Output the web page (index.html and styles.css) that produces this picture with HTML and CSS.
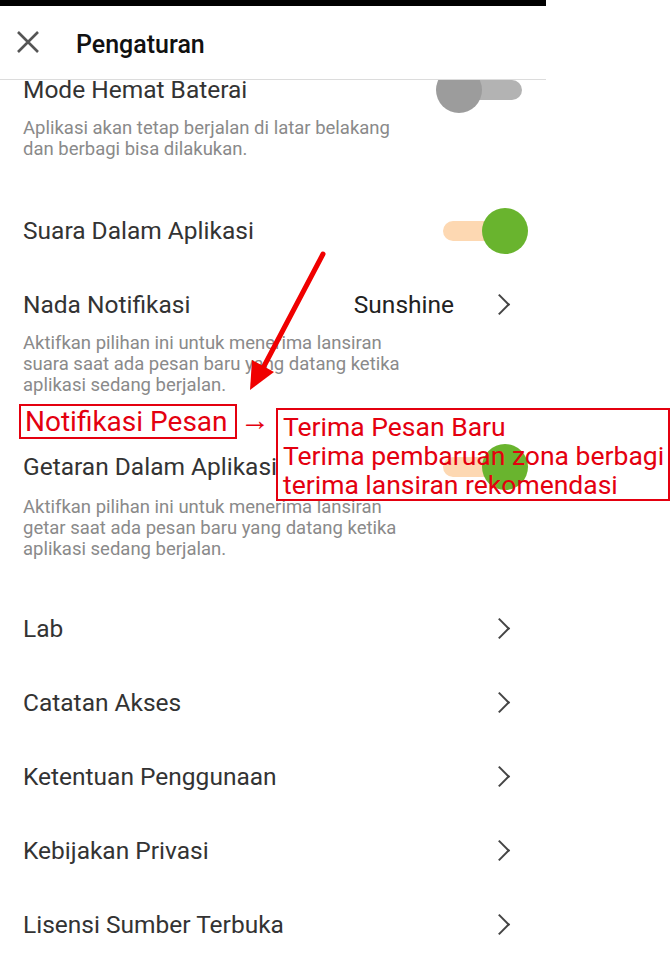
FILE: index.html
```html
<!DOCTYPE html>
<html lang="id">
<head>
  <meta charset="UTF-8">
  <title>Pengaturan</title>
  <link rel="stylesheet" href="styles.css">
</head>
<body>
  <div class="phone">
    <div class="statusbar"></div>
    <header class="topbar">
      <svg class="close" width="26" height="26" viewBox="0 0 26 26">
        <path d="M3 3 L23 23 M23 3 L3 23" stroke="#555" stroke-width="2.6" fill="none"/>
      </svg>
      <h1>Pengaturan</h1>
    </header>

    <div class="scroll">
      <ul class="list">
        <li class="item first">
          <div class="row">
            <span class="title">Mode Hemat Baterai</span>
            <span class="toggle off"><span class="knob"></span></span>
          </div>
          <p class="desc">Aplikasi akan tetap berjalan di latar belakang<br>dan berbagi bisa dilakukan.</p>
        </li>
        <li class="item simple">
          <div class="row">
            <span class="title">Suara Dalam Aplikasi</span>
            <span class="toggle on"><span class="knob"></span></span>
          </div>
        </li>
        <li class="item">
          <div class="row">
            <span class="title">Nada Notifikasi</span>
            <span class="value">Sunshine</span>
            <span class="chev"></span>
          </div>
          <p class="desc">Aktifkan pilihan ini untuk menerima lansiran<br>suara saat ada pesan baru yang datang ketika<br>aplikasi sedang berjalan.</p>
        </li>
        <li class="item tight">
          <div class="row">
            <span class="title">Getaran Dalam Aplikasi</span>
            <span class="toggle on"><span class="knob"></span></span>
          </div>
          <p class="desc">Aktifkan pilihan ini untuk menerima lansiran<br>getar saat ada pesan baru yang datang ketika<br>aplikasi sedang berjalan.</p>
        </li>
        <li class="item simple">
          <div class="row"><span class="title">Lab</span><span class="chev"></span></div>
        </li>
        <li class="item simple">
          <div class="row"><span class="title">Catatan Akses</span><span class="chev"></span></div>
        </li>
        <li class="item simple">
          <div class="row"><span class="title">Ketentuan Penggunaan</span><span class="chev"></span></div>
        </li>
        <li class="item simple">
          <div class="row"><span class="title">Kebijakan Privasi</span><span class="chev"></span></div>
        </li>
        <li class="item simple">
          <div class="row"><span class="title">Lisensi Sumber Terbuka</span><span class="chev"></span></div>
        </li>
      </ul>
    </div>
  </div>

  <!-- annotations drawn over the screenshot -->
  <svg class="arrow" width="672" height="960" viewBox="0 0 672 960">
    <line x1="323" y1="254" x2="262" y2="370" stroke="#f00000" stroke-width="5" stroke-linecap="round"/>
    <polygon points="250,390 252,360 274,372" fill="#f00000"/>
  </svg>
  <div class="note-label">Notifikasi Pesan</div>
  <div class="note-arrow">&rarr;</div>
  <div class="note-box">
    Terima Pesan Baru<br>
    Terima pembaruan zona berbagi<br>
    terima lansiran rekomendasi
  </div>
</body>
</html>
```

FILE: styles.css
```css
body {
  margin: 0;
  background: #fff;
  font-family: Roboto, "Liberation Sans", sans-serif;
  width: 672px;
  height: 960px;
  overflow: hidden;
}

.phone {
  width: 546px;
  height: 960px;
  display: flex;
  flex-direction: column;
}

.statusbar {
  height: 6px;
  background: #000;
  flex-shrink: 0;
}

.topbar {
  height: 70px;
  padding: 3px 0 0 15px;
  border-bottom: 1px solid #dcdcdc;
  display: flex;
  align-items: center;
  flex-shrink: 0;
}

.close {
  display: block;
  margin-top: -4px;
}

.topbar h1 {
  margin: 0 0 0 35px;
  font-size: 25px;
  font-weight: 500;
  color: #111;
}

.scroll {
  flex: 1;
  overflow: hidden;
}

.list {
  list-style: none;
  margin: -24px 0 0;
  padding: 0;
}

.item {
  padding: 24px 18px 34px 23px;
}

.item.simple {
  padding-bottom: 24px;
}

.item.tight {
  padding-bottom: 32px;
}

.row {
  display: flex;
  align-items: center;
  height: 26px;
}

.title {
  flex: 1;
  font-size: 24.5px;
  line-height: 26px;
  color: #333;
  white-space: nowrap;
}

.item.first .row {
  height: 20px;
}

.item.first .title {
  line-height: 20px;
}

.value {
  font-size: 24.5px;
  line-height: 26px;
  color: #222;
  margin-right: 38px;
}

.chev {
  width: 13px;
  height: 13px;
  border-top: 2.6px solid #444;
  border-right: 2.6px solid #444;
  transform: rotate(45deg);
  margin-right: 21px;
}

.desc {
  margin: 15px 0 0;
  font-size: 18.5px;
  line-height: 21px;
  color: #8a8a8a;
  white-space: nowrap;
}

.item.first .desc {
  margin-top: 17.5px;
}

.item.tight .desc {
  margin-top: 17px;
}

.toggle {
  position: relative;
  width: 79px;
  height: 20px;
  border-radius: 10px;
  margin-right: 6px;
}

.toggle .knob {
  position: absolute;
  top: -13px;
  width: 46px;
  height: 46px;
  border-radius: 50%;
}

.toggle.off {
  background: #b3b3b3;
}

.toggle.off .knob {
  left: -7px;
  background: #9c9c9c;
}

.toggle.on {
  background: #fdd8b2;
}

.toggle.on .knob {
  right: -6px;
  background: #69b42e;
}

.arrow {
  position: absolute;
  left: 0;
  top: 0;
  pointer-events: none;
}

.note-label {
  position: absolute;
  left: 19px;
  top: 404px;
  width: 210px;
  height: 31px;
  border: 2px solid #e4000f;
  color: #e4000f;
  font-size: 28px;
  line-height: 31px;
  padding-left: 4px;
  white-space: nowrap;
}

.note-arrow {
  position: absolute;
  left: 240px;
  top: 402px;
  font-size: 30px;
  line-height: 36px;
  color: #e4000f;
}

.note-box {
  position: absolute;
  left: 276px;
  top: 408px;
  width: 385px;
  height: 87px;
  border: 2px solid #e4000f;
  padding: 2px 0 0 5px;
  color: #e4000f;
  font-size: 26.5px;
  line-height: 29px;
  white-space: nowrap;
}
```
